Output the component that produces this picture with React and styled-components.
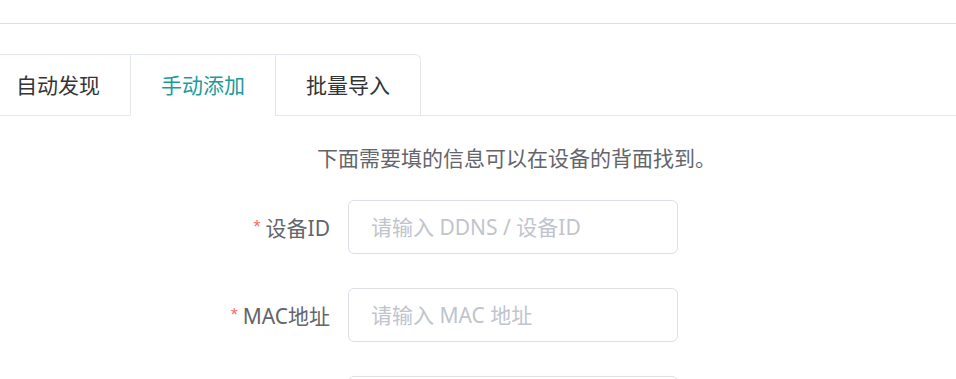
import React from "react";
import styled, { createGlobalStyle } from "styled-components";

const Global = createGlobalStyle`
  html, body { margin: 0; padding: 0; background: #fff; }
  body {
    font-family: "Noto Sans", "Noto Sans CJK SC", "Microsoft YaHei", sans-serif;
    -webkit-font-smoothing: antialiased;
  }
  * { box-sizing: border-box; }
`;

const Page = styled.div`
  width: 956px;
  height: 379px;
  overflow: hidden;
  background: #fff;
`;

const TopBar = styled.div`
  height: 24px;
  border-bottom: 1px solid #dcdfe6;
`;

const TabsHeader = styled.div`
  margin-top: 30px;
  border-bottom: 1px solid #e4e7ed;
  display: flex;
`;

const TabsNav = styled.div`
  display: flex;
  margin-left: -15px;
  border: 1px solid #e4e7ed;
  border-bottom: none;
  border-radius: 6px 6px 0 0;
  margin-bottom: -1px;
`;

const TabItem = styled.div`
  height: 61px;
  padding: 0 30px;
  line-height: 60px;
  font-size: 21px;
  color: ${(p) => (p.$active ? "#1c9b99" : "#333438")};
  border-left: ${(p) => (p.$first ? "none" : "1px solid #e4e7ed")};
  border-bottom: 1px solid ${(p) => (p.$active ? "#fff" : "transparent")};
  white-space: nowrap;
`;

const Hint = styled.div`
  margin-top: 27px;
  padding-left: 317px;
  font-size: 21px;
  line-height: 30px;
  color: #63656b;
  white-space: nowrap;
`;

const Form = styled.div`
  margin-top: 27px;
`;

const FormItem = styled.div`
  display: flex;
  margin-bottom: 34px;
`;

const Label = styled.label`
  width: 348px;
  height: 54px;
  padding-right: 18px;
  display: flex;
  align-items: center;
  justify-content: flex-end;
  font-size: 21px;
  color: #63656b;
  white-space: nowrap;
`;

const Star = styled.span`
  font-family: "Liberation Sans", sans-serif;
  font-size: 18px;
  line-height: 1;
  color: #f56c6c;
  margin-right: 5px;
  align-self: center;
  position: relative;
  top: 0px;
`;

const Input = styled.input`
  width: 330px;
  height: 54px;
  padding: 0 22px;
  border: 1px solid #dcdfe6;
  border-radius: 6px;
  font-family: inherit;
  font-size: 21px;
  color: #606266;
  outline: none;
  &::placeholder { color: #c0c4cc; }
`;

export default function App() {
  return (
    <Page>
      <Global />
      <TopBar />
      <TabsHeader>
        <TabsNav>
          <TabItem $first>自动发现</TabItem>
          <TabItem $active>手动添加</TabItem>
          <TabItem>批量导入</TabItem>
        </TabsNav>
      </TabsHeader>
      <Hint>下面需要填的信息可以在设备的背面找到。</Hint>
      <Form>
        <FormItem>
          <Label><Star>*</Star>设备ID</Label>
          <Input placeholder="请输入 DDNS / 设备ID" />
        </FormItem>
        <FormItem>
          <Label><Star>*</Star>MAC地址</Label>
          <Input placeholder="请输入 MAC 地址" />
        </FormItem>
        <FormItem>
          <Label />
          <Input />
        </FormItem>
      </Form>
    </Page>
  );
}
